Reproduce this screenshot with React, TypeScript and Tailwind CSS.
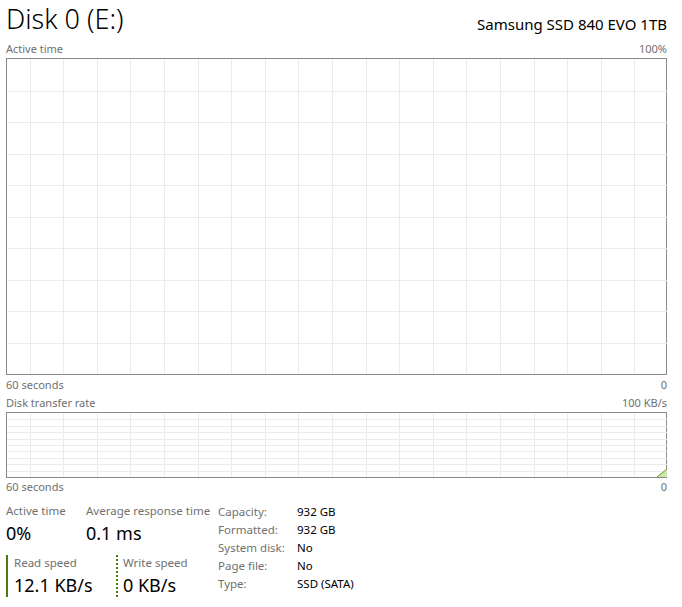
const FONT = { fontFamily: '"Noto Sans", "Open Sans", sans-serif' };

function Grid({ h, rows, green }: { h: number; rows: number; green?: boolean }) {
  const w = 660;
  const cols: number[] = [];
  for (let x = 22.5; x < w; x += 33.6) cols.push(Math.round(x) + 0.5);
  const lines: number[] = [];
  for (let i = 1; i < rows; i++) lines.push(Math.round((h * i) / rows) + 0.5);
  return (
    <div className="border border-[#8b8b8b] bg-white" style={{ height: h + 2 }}>
      <svg width={w} height={h} className="block">
        {cols.map((x) => (
          <line key={"c" + x} x1={x} y1={0} x2={x} y2={h} stroke="#ebebeb" strokeWidth={1} />
        ))}
        {lines.map((y) => (
          <line key={"r" + y} x1={0} y1={y} x2={w} y2={y} stroke="#ebebeb" strokeWidth={1} />
        ))}
        {green && (
          <>
            <polygon points={`${w - 10},${h} ${w},${h - 8} ${w},${h}`} fill="#cde6ab" />
            <line x1={w - 10} y1={h} x2={w} y2={h - 8} stroke="#6b9a2a" strokeWidth={1} />
          </>
        )}
      </svg>
    </div>
  );
}

function Row({ l, r }: { l: string; r: string }) {
  return (
    <div className="flex justify-between text-[11px] leading-[14px] text-[#707070]">
      <span>{l}</span>
      <span>{r}</span>
    </div>
  );
}

export default function App() {
  const info = [
    ["Capacity:", "932 GB"],
    ["Formatted:", "932 GB"],
    ["System disk:", "No"],
    ["Page file:", "No"],
    ["Type:", "SSD (SATA)"],
  ];
  return (
    <div className="h-[607px] w-[682px] bg-white pl-[6px] pr-[15px] text-black" style={FONT}>
      {/* Header */}
      <div className="flex h-[42px] items-start justify-between">
        <span className="mt-[2px] text-[27px] font-light leading-[34px]">Disk 0 (E:)</span>
        <span className="mt-[14px] text-[15px] leading-[20px]">Samsung SSD 840 EVO 1TB</span>
      </div>

      <Row l="Active time" r="100%" />
      <div className="mt-[2px]">
        <Grid h={315} rows={10} />
      </div>
      <div className="mt-[3px]">
        <Row l="60 seconds" r="0" />
      </div>
      <div className="mt-[4px]">
        <Row l="Disk transfer rate" r="100 KB/s" />
      </div>
      <div className="mt-[2px]">
        <Grid h={64} rows={10} green />
      </div>
      <div className="mt-[2px]">
        <Row l="60 seconds" r="0" />
      </div>

      {/* Stats */}
      <div className="mt-[9px] flex">
        <div className="flex w-[212px] flex-col">
          <div className="flex">
            <div className="w-[80px]">
              <div className="text-[11.5px] leading-[16px] text-[#707070]">Active time</div>
              <div className="mt-[2px] text-[18px] leading-[24px]">0%</div>
            </div>
            <div>
              <div className="text-[11.5px] leading-[16px] text-[#707070]">Average response time</div>
              <div className="mt-[2px] text-[18px] leading-[24px]">0.1 ms</div>
            </div>
          </div>
          <div className="mt-[10px] flex">
            <div className="w-[110px] border-l-2 border-[#4d7b0f] pl-[6px]">
              <div className="text-[11.5px] leading-[16px] text-[#707070]">Read speed</div>
              <div className="mt-[2px] text-[18px] leading-[24px]">12.1 KB/s</div>
            </div>
            <div className="border-l-2 border-dotted border-[#4d7b0f] pl-[5px]">
              <div className="text-[11.5px] leading-[16px] text-[#707070]">Write speed</div>
              <div className="mt-[2px] text-[18px] leading-[24px]">0 KB/s</div>
            </div>
          </div>
        </div>
        <div className="flex flex-col">
          {info.map(([k, v]) => (
            <div key={k} className="flex text-[11.5px] leading-[18px]">
              <span className="w-[79px] text-[#707070]">{k}</span>
              <span>{v}</span>
            </div>
          ))}
        </div>
      </div>
    </div>
  );
}
